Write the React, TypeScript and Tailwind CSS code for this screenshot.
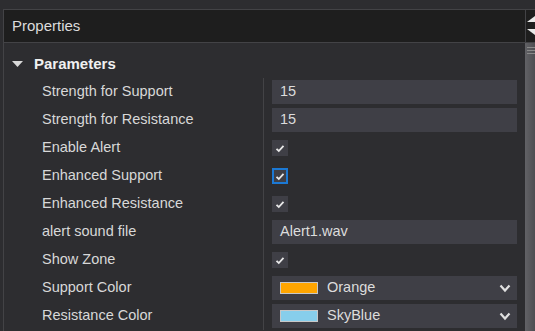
import React from "react";

const font = { fontFamily: '"Liberation Sans", Arial, sans-serif' };

function Check({ focused }: { focused?: boolean }) {
  return (
    <div
      className={
        "w-[16px] h-[16px] flex items-center justify-center bg-[#3f3f46] " +
        (focused ? "border-2 border-[#1c79d4]" : "")
      }
    >
      <svg width="10" height="9" viewBox="0 0 10 9">
        <path d="M1.5 4.8 L3.8 7 L8.5 1.8" stroke="#e8e8e8" strokeWidth="1.8" fill="none" />
      </svg>
    </div>
  );
}

function TextBox({ v }: { v: string }) {
  return (
    <div className="w-[245px] h-[24px] bg-[#3f3f46] flex items-center pl-[8px] text-[14.5px] text-[#dcdcdc]">
      {v}
    </div>
  );
}

function ColorBox({ color, name }: { color: string; name: string }) {
  return (
    <div className="w-[245px] h-[24px] bg-[#3f3f46] flex items-center pl-[8px] pr-[6px] text-[14.5px] text-[#dcdcdc]">
      <div className="w-[38px] h-[12px] border border-[#c8c8c8]" style={{ backgroundColor: color }} />
      <span className="ml-[9px] flex-1">{name}</span>
      <svg width="12" height="9" viewBox="0 0 12 9">
        <path d="M1.5 1.5 L6 6.5 L10.5 1.5" stroke="#e0e0e0" strokeWidth="2.2" fill="none" />
      </svg>
    </div>
  );
}

const rows: { label: string; value: React.ReactNode }[] = [
  { label: "Strength for Support", value: <TextBox v="15" /> },
  { label: "Strength for Resistance", value: <TextBox v="15" /> },
  { label: "Enable Alert", value: <Check /> },
  { label: "Enhanced Support", value: <Check focused /> },
  { label: "Enhanced Resistance", value: <Check /> },
  { label: "alert sound file", value: <TextBox v="Alert1.wav" /> },
  { label: "Show Zone", value: <Check /> },
  { label: "Support Color", value: <ColorBox color="#ffa500" name="Orange" /> },
  { label: "Resistance Color", value: <ColorBox color="#87ceeb" name="SkyBlue" /> },
];

export default function App() {
  return (
    <div className="w-[535px] h-[331px] bg-[#2d2d30] overflow-hidden flex flex-col" style={font}>
      <div className="h-[9px] shrink-0" />
      <div className="ml-[3px] flex-1 flex flex-col border-l border-t border-[#434346] min-h-0">
        {/* header */}
        <div className="h-[33px] shrink-0 bg-[#1e1e1e] border-b border-[#434346] flex">
          <div className="flex-1 flex items-center pl-[8px] text-[15px] text-[#dcdcdc]">Properties</div>
          <div className="w-[10px] border-l border-[#434346] flex flex-col items-end justify-center gap-[7px] pb-[1px]">
            <svg width="8" height="6" viewBox="0 0 8 6">
              <path d="M0 6 L8 0 L8 6 Z" fill="#e8e8e8" />
            </svg>
            <svg width="8" height="6" viewBox="0 0 8 6">
              <path d="M0 0 L8 0 L8 6 Z" fill="#e8e8e8" />
            </svg>
          </div>
        </div>
        {/* body */}
        <div className="flex-1 flex min-h-0">
          <div className="flex-1 pt-[7px]">
            <div className="h-[28px] flex items-center">
              <svg className="ml-[8px]" width="11" height="6" viewBox="0 0 11 6">
                <path d="M0 0 L11 0 L5.5 6 Z" fill="#d8d8d8" />
              </svg>
              <span className="ml-[11px] text-[15px] font-bold text-[#f0f0f0]">Parameters</span>
            </div>
            <div className="grid grid-cols-[260px_1fr]">
              {rows.map((r, i) => (
                <React.Fragment key={i}>
                  <div className="h-[28px] flex items-center pl-[38px] border-r border-[#434346] text-[14.5px] text-[#d8d8d8]">
                    {r.label}
                  </div>
                  <div className="h-[28px] flex items-center pl-[8px]">{r.value}</div>
                </React.Fragment>
              ))}
            </div>
          </div>
          {/* scrollbar */}
          <div className="w-[10px] shrink-0 bg-[#3e3e42] flex flex-col">
            <div className="h-[300px] bg-gradient-to-r from-[#626266] to-[#4e4e52] flex flex-col items-end pt-[4px] gap-[2px]">
              <div className="w-[8px] h-px bg-[#8a8a8a]" />
              <div className="w-[8px] h-px bg-[#8a8a8a]" />
              <div className="w-[8px] h-px bg-[#8a8a8a]" />
            </div>
          </div>
        </div>
      </div>
    </div>
  );
}
